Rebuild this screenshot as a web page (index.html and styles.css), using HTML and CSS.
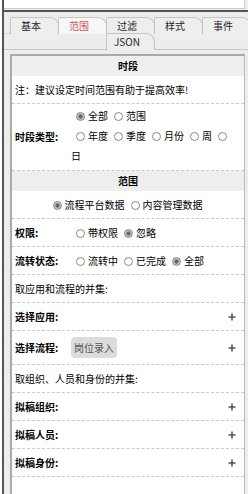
FILE: index.html
```html
<!DOCTYPE html>
<html lang="zh">
<head>
  <meta charset="UTF-8">
  <title>范围设置</title>
  <link rel="stylesheet" href="styles.css">
</head>
<body>
  <div class="frame">
    <div class="topbox"></div>
    <div class="rule"></div>

    <div class="tabs">
      <div class="tab-row">
        <div class="tab">基本</div>
        <div class="tab active">范围</div>
        <div class="tab">过滤</div>
        <div class="tab">样式</div>
        <div class="tab">事件</div>
      </div>
      <div class="tab-row second">
        <div class="tab spacer"></div>
        <div class="tab spacer"></div>
        <div class="tab">JSON</div>
      </div>
    </div>

    <div class="panel">
      <div class="section-title">时段</div>
      <div class="row">注：建议设定时间范围有助于提高效率!</div>
      <div class="row field period">
        <div class="field-label">时段类型:</div>
        <div class="field-value">
          <div class="opt-line"><label class="opt"><input type="radio" name="ptype" checked>全部</label><label class="opt"><input type="radio" name="ptype">范围</label></div>
          <div class="opt-line"><label class="opt"><input type="radio" name="unit">年度</label><label class="opt"><input type="radio" name="unit">季度</label><label class="opt"><input type="radio" name="unit">月份</label><label class="opt"><input type="radio" name="unit">周</label><label class="opt"><input type="radio" name="unit">日</label></div>
        </div>
      </div>

      <div class="section-title">范围</div>
      <div class="row centered"><label class="opt"><input type="radio" name="src" checked>流程平台数据</label><label class="opt"><input type="radio" name="src">内容管理数据</label></div>
      <div class="row field">
        <div class="field-label">权限:</div>
        <div class="field-value"><label class="opt"><input type="radio" name="auth">带权限</label><label class="opt"><input type="radio" name="auth" checked>忽略</label></div>
      </div>
      <div class="row field">
        <div class="field-label">流转状态:</div>
        <div class="field-value"><label class="opt"><input type="radio" name="state">流转中</label><label class="opt"><input type="radio" name="state">已完成</label><label class="opt"><input type="radio" name="state" checked>全部</label></div>
      </div>
      <div class="row">取应用和流程的并集:</div>
      <div class="row field">
        <div class="field-label">选择应用:</div>
        <svg class="plus" viewBox="0 0 8 8" width="8" height="8"><path d="M4 0.5v7M0.5 4h7" stroke="#555" stroke-width="1.6"/></svg>
      </div>
      <div class="row field">
        <div class="field-label">选择流程:</div>
        <div class="field-value"><span class="chip">岗位录入</span></div>
        <svg class="plus" viewBox="0 0 8 8" width="8" height="8"><path d="M4 0.5v7M0.5 4h7" stroke="#555" stroke-width="1.6"/></svg>
      </div>
      <div class="row">取组织、人员和身份的并集:</div>
      <div class="row field">
        <div class="field-label">拟稿组织:</div>
        <svg class="plus" viewBox="0 0 8 8" width="8" height="8"><path d="M4 0.5v7M0.5 4h7" stroke="#555" stroke-width="1.6"/></svg>
      </div>
      <div class="row field">
        <div class="field-label">拟稿人员:</div>
        <svg class="plus" viewBox="0 0 8 8" width="8" height="8"><path d="M4 0.5v7M0.5 4h7" stroke="#555" stroke-width="1.6"/></svg>
      </div>
      <div class="row field">
        <div class="field-label">拟稿身份:</div>
        <svg class="plus" viewBox="0 0 8 8" width="8" height="8"><path d="M4 0.5v7M0.5 4h7" stroke="#555" stroke-width="1.6"/></svg>
      </div>
    </div>
  </div>
</body>
</html>
```

FILE: styles.css
```css
body {
  margin: 0;
  background: #fff;
  font-family: "Noto Sans CJK SC", "Noto Sans", sans-serif;
  font-size: 10px;
  color: #000;
}
.frame {
  margin-left: 2px;
  border-left: 2px solid #555;
  background: #ededed;
  height: 494px;
  overflow: hidden;
}
.topbox {
  height: 8px;
  width: 240px;
  background: #fff;
  border-bottom: 1px solid #ccc;
  border-right: 1px solid #ccc;
}
.rule {
  margin-top: 1px;
  height: 2px;
  background: #555;
}
.tabs {
  padding-top: 5px;
}
.tab-row {
  display: flex;
  height: 16px;
  padding-left: 6px;
  border-bottom: 1px solid #d6d6d6;
}
.tab-row.second {
  margin-top: -1px;
  border-bottom-color: #c8c8c8;
}
.tab {
  position: relative;
  flex-shrink: 0;
  box-sizing: border-box;
  width: 49px;
  height: 17px;
  margin-right: -1px;
  padding-right: 7px;
  border: 1px solid #c4c4c4;
  border-bottom: none;
  border-radius: 2px 9px 0 0;
  background: #eeeeee;
  color: #222;
  text-align: center;
  line-height: 15px;
}
.tab.active {
  z-index: 1;
  background: #f7f7f7;
  color: #d9535a;
}
.tab.spacer {
  visibility: hidden;
}
.panel {
  box-sizing: border-box;
  width: 235px;
  height: 440px;
  margin: 4px 0 0 6px;
  border-top: 2px solid #aaa;
  border-left: 2px solid #aaa;
  border-right: 1px solid #bbb;
  background: #fff;
}
.section-title {
  height: 20px;
  line-height: 20px;
  background: #eee;
  text-align: center;
  font-weight: bold;
}
.row {
  padding: 6px 8px 6px 3px;
  line-height: 15px;
  border-bottom: 1px dashed #c8c8c8;
}
.row.field {
  display: flex;
  align-items: center;
}
.row.period {
  padding-top: 2px;
  padding-bottom: 4px;
}
.row.centered {
  text-align: center;
}
.field-label {
  flex-shrink: 0;
  width: 56px;
  font-weight: bold;
}
.field-value {
  flex: 1;
}
.opt-line {
  line-height: 20px;
}
.opt input {
  appearance: none;
  box-sizing: border-box;
  width: 9px;
  height: 9px;
  margin: 0 3px 0 5px;
  border: 1px solid #888;
  border-radius: 50%;
  background: #fff;
  vertical-align: -1px;
}
.opt input:checked {
  background: radial-gradient(circle, #666 0 1.8px, #c4c4c4 2.4px);
}
.opt {
  margin-right: 1px;
}
.chip {
  display: inline-block;
  height: 21px;
  padding: 0 3px;
  line-height: 21px;
  border-radius: 4px;
  background: #dcdcdc;
  color: #555;
}
.plus {
  flex-shrink: 0;
  margin-left: auto;
}
```
